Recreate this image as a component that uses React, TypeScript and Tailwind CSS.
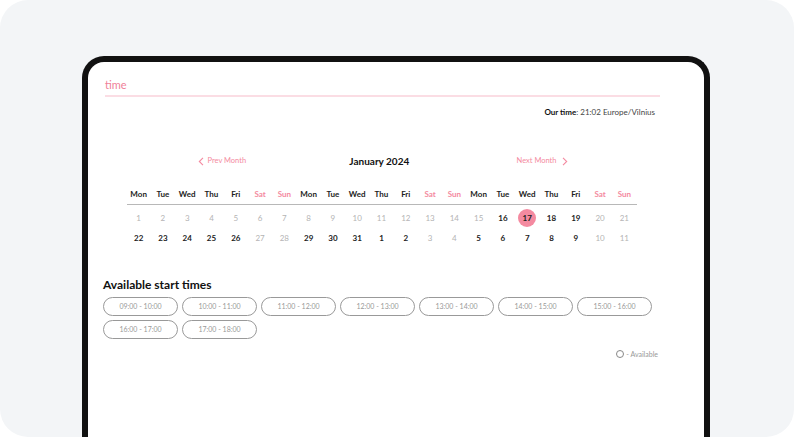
import React from 'react';

const dayNames = ['Mon', 'Tue', 'Wed', 'Thu', 'Fri', 'Sat', 'Sun'];

type Day = { n: number; kind: 'past' | 'open' | 'weekend' | 'today' };

const row1: Day[] = Array.from({ length: 21 }, (_, i) => {
  const n = i + 1;
  if (n === 17) return { n, kind: 'today' };
  if (n <= 15) return { n, kind: 'past' };
  if (n === 20 || n === 21) return { n, kind: 'weekend' };
  return { n, kind: 'open' };
});

const row2: Day[] = [22, 23, 24, 25, 26, 27, 28, 29, 30, 31, 1, 2, 3, 4, 5, 6, 7, 8, 9, 10, 11].map(
  (n, i) => ({ n, kind: i % 7 >= 5 ? 'weekend' : 'open' })
);

const slots = [
  '09:00 - 10:00',
  '10:00 - 11:00',
  '11:00 - 12:00',
  '12:00 - 13:00',
  '13:00 - 14:00',
  '14:00 - 15:00',
  '15:00 - 16:00',
  '16:00 - 17:00',
  '17:00 - 18:00',
];

const DayCell = ({ d }: { d: Day }) => {
  if (d.kind === 'today') {
    return (
      <div className="flex h-5 items-center justify-center">
        <span className="flex h-[18px] w-[18px] items-center justify-center rounded-full bg-[#f48aa0] text-[8px] font-bold text-[#222]">
          {d.n}
        </span>
      </div>
    );
  }
  const color =
    d.kind === 'open' ? 'text-[#222] font-bold' : 'text-[#b4b4b4]';
  return <div className={`flex h-5 items-center justify-center text-[8px] ${color}`}>{d.n}</div>;
};

const Chevron = ({ dir }: { dir: 'left' | 'right' }) => (
  <svg width="6" height="9" viewBox="0 0 6 9" fill="none" stroke="#f48aa0" strokeWidth="1.1">
    {dir === 'left' ? <path d="M5 0.8 L1.3 4.5 L5 8.2" /> : <path d="M1 0.8 L4.7 4.5 L1 8.2" />}
  </svg>
);

export default function App() {
  return (
    <div className="h-[437px] w-[794px] bg-white" style={{ fontFamily: 'Lato, "Open Sans", sans-serif' }}>
      <div className="h-[437px] overflow-hidden rounded-[28px] bg-[#f3f5f7] pl-[82px] pt-[56px]">
        <div className="h-[400px] w-[628px] rounded-t-[22px] border-[6px] border-b-0 border-[#111] bg-white">
          <div className="pl-[15px] pr-[44px]">
            <div className="ml-[2px] border-b-2 border-[#fbdde4] pb-[3px] pt-[16px] text-[11px] leading-[14px] text-[#f07f99]">
              time
            </div>
            <div className="mr-[5px] mt-[10px] text-right text-[8px] leading-[10px] text-[#444]">
              <span className="font-bold text-[#111]">Our time</span>: 21:02 Europe/Vilnius
            </div>

            <div className="mx-auto mt-[38px] w-[510px]">
              <div className="flex items-center justify-between pl-[71px] pr-[69px] text-[7.5px] leading-[12px]">
                <div className="flex items-center gap-[4px] text-[#f48aa0]">
                  <Chevron dir="left" />
                  <span>Prev Month</span>
                </div>
                <div className="-ml-[4px] text-[10px] font-bold text-[#111]">January 2024</div>
                <div className="flex items-center gap-[5px] text-[#f48aa0]">
                  <span>Next Month</span>
                  <Chevron dir="right" />
                </div>
              </div>

              <div className="mt-[21px] grid grid-cols-[repeat(21,minmax(0,1fr))] border-b border-[#b8b8b8] pb-[4px]">
                {Array.from({ length: 21 }, (_, i) => {
                  const name = dayNames[i % 7];
                  const weekend = i % 7 >= 5;
                  return (
                    <div
                      key={i}
                      className={`text-center text-[8px] font-bold leading-[12px] ${weekend ? 'text-[#f48aa0]' : 'text-[#222]'}`}
                    >
                      {name}
                    </div>
                  );
                })}
              </div>

              <div className="mt-[3px] grid grid-cols-[repeat(21,minmax(0,1fr))]">
                {row1.map((d, i) => (
                  <DayCell key={'a' + i} d={d} />
                ))}
                {row2.map((d, i) => (
                  <DayCell key={'b' + i} d={d} />
                ))}
              </div>
            </div>

            <div className="mt-[30px] text-[12px] font-bold leading-[14px] text-[#111]">Available start times</div>
            <div className="mt-[5px] flex w-[556px] flex-wrap gap-x-[4px] gap-y-[4px]">
              {slots.map((s) => (
                <div
                  key={s}
                  className="flex h-[19px] w-[75px] items-center justify-center rounded-full border border-[#999] text-[7px] text-[#999]"
                >
                  {s}
                </div>
              ))}
            </div>
            <div className="mr-[2px] mt-[10px] flex items-center justify-end gap-[2px] text-[7px] text-[#999]">
              <span className="h-[8px] w-[8px] rounded-full border border-[#888]" />
              <span>- Available</span>
            </div>
          </div>
        </div>
      </div>
    </div>
  );
}
